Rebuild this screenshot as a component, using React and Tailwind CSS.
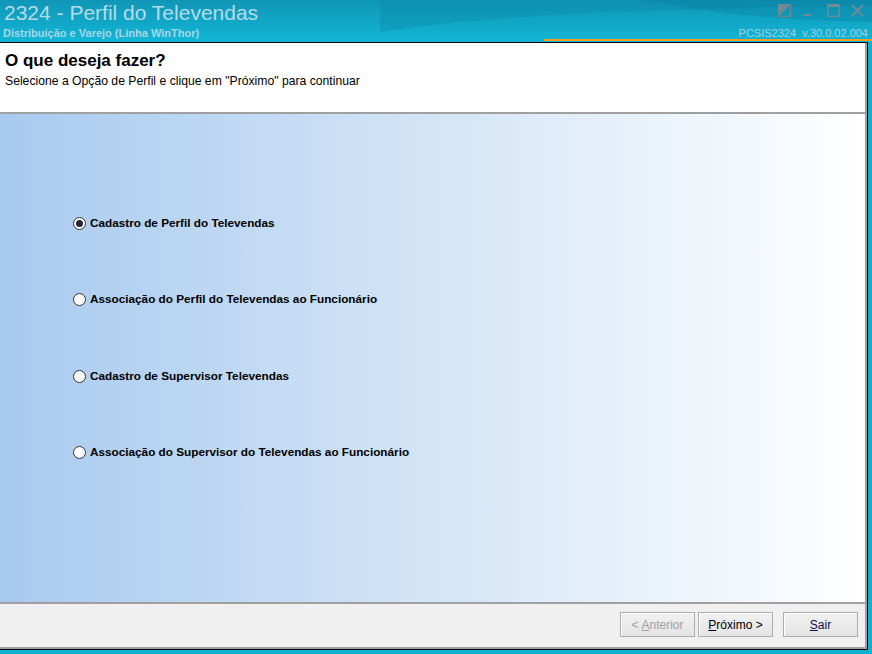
import React, { useState } from "react";

const options = [
  "Cadastro de Perfil do Televendas",
  "Associação do Perfil do Televendas ao Funcionário",
  "Cadastro de Supervisor Televendas",
  "Associação do Supervisor do Televendas ao Funcionário",
];

const Radio = ({ checked }) => (
  <span className="relative flex h-[13px] w-[13px] shrink-0 items-center justify-center rounded-full border border-[#333] bg-white">
    {checked && <span className="h-[7px] w-[7px] rounded-full bg-[#2a2238]" />}
  </span>
);

const WinButton = ({ children, disabled }) => (
  <button
    type="button"
    className={`flex h-[25px] w-[75px] items-center justify-center border border-[#adadad] bg-gradient-to-b from-[#f2f2f2] to-[#e4e4e4] text-[12px] shadow-[inset_1px_1px_0_#fff] ${
      disabled ? "text-[#a0a0a0]" : "text-black"
    }`}
  >
    {children}
  </button>
);

const App = () => {
  const [selected, setSelected] = useState(0);

  return (
    <div
      className="flex h-[654px] w-[872px] flex-col overflow-hidden bg-[#0bb2d2]"
      style={{ fontFamily: '"Liberation Sans", Arial, sans-serif' }}
    >
      {/* title bar */}
      <div className="relative h-[42px] shrink-0 overflow-hidden bg-gradient-to-b from-[#1096b6] to-[#12b6d6]">
        <svg className="absolute inset-0" width="872" height="42" viewBox="0 0 872 42">
          <path d="M380 32 C 500 14, 650 8, 872 6 L872 0 L380 0 Z" fill="#0b87a8" opacity="0.35" />
          <path d="M640 0 C 700 10, 760 20, 872 22 L872 0 Z" fill="#0a7c9c" opacity="0.3" />
        </svg>
        <div className="relative pl-[4px] pt-[1px] text-[21px] leading-[24px] text-[#b5dbea]">
          2324 - Perfil do Televendas
        </div>
        <div className="relative mt-[2px] pl-[3px] text-[11px] font-bold leading-[13px] text-[#a9d6e6]">
          Distribuição e Varejo (Linha WinThor)
        </div>
        <div className="absolute right-[8px] top-[4px] flex items-center gap-[10px]">
          <svg width="13" height="13" viewBox="0 0 13 13">
            <rect x="0.5" y="0.5" width="12" height="12" fill="none" stroke="#6f8a95" strokeWidth="1.5" />
            <path d="M1 12 L12 1 L1 1 Z" fill="#6f8a95" />
          </svg>
          <svg width="12" height="13" viewBox="0 0 12 13">
            <rect x="2" y="10" width="8" height="2" fill="#6f8a95" />
          </svg>
          <svg width="13" height="13" viewBox="0 0 13 13" className="ml-[4px]">
            <rect x="0.75" y="0.75" width="11.5" height="11.5" fill="none" stroke="#6f8a95" strokeWidth="1.5" />
            <rect x="1" y="1" width="11" height="2" fill="#6f8a95" />
          </svg>
          <svg width="13" height="13" viewBox="0 0 13 13" className="ml-[1px]">
            <path d="M1 1 L12 12 M12 1 L1 12" stroke="#6f8a95" strokeWidth="2" />
          </svg>
        </div>
        <div className="absolute right-[4px] top-[27px] text-[11px] leading-[12px] text-[#a4cfe0]">
          PCSIS2324&nbsp;&nbsp;v.30.0.02.004
        </div>
        <div className="absolute bottom-[1px] left-[544px] right-0 h-[2px] bg-[#f39a1f]" />
      </div>

      {/* client area */}
      <div className="mr-[4px] flex h-[608px] flex-col border-r border-t border-b border-black bg-white">
        <div className="flex flex-1 flex-col border-r-2 border-[#a0a0a0]">
          <div className="h-[71px] shrink-0 border-b-2 border-[#a0a0a0] bg-white pl-[5px] pt-[7px]">
            <div className="text-[17px] font-bold leading-[22px] text-black">O que deseja fazer?</div>
            <div className="mt-[2px] text-[12.2px] leading-[14px] text-black">
              Selecione a Opção de Perfil e clique em "Próximo" para continuar
            </div>
          </div>

          <div className="flex h-[490px] shrink-0 flex-col border-b-2 border-[#a0a0a0] bg-gradient-to-r from-[#a8caef] via-[#d4e5f6] to-white pl-[73px] pt-[103px]">
            {options.map((label, i) => (
              <label
                key={label}
                onClick={() => setSelected(i)}
                className="flex h-[76.4px] cursor-pointer items-start gap-[4px] text-[11.75px] font-bold leading-[13px] text-black"
              >
                <Radio checked={selected === i} />
                <span className="-mt-[1px]">{label}</span>
              </label>
            ))}
          </div>

          <div className="flex flex-1 items-start justify-end border-b-2 border-[#a0a0a0] bg-[#f0f0f0] pr-[7px] pt-[8px]">
            <WinButton disabled>
              &lt; <u className="ml-[3px]">A</u>nterior
            </WinButton>
            <div className="ml-[3px]">
              <WinButton>
                <u>P</u>róximo &gt;
              </WinButton>
            </div>
            <div className="ml-[10px]">
              <WinButton>
                <span className="text-[#101050]">
                  <u>S</u>air
                </span>
              </WinButton>
            </div>
          </div>
        </div>
      </div>
    </div>
  );
};

export default App;
